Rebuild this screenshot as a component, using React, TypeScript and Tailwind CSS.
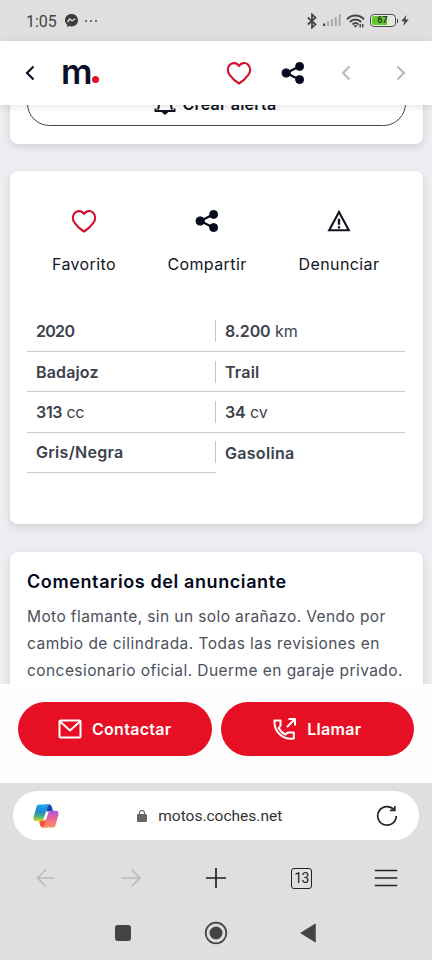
import type { ReactNode } from "react"

function HeartIcon() {
  return (
    <svg width="26" height="24" viewBox="0 0 26 24" fill="none" stroke="#d20f2f" strokeWidth="2.1" strokeLinejoin="round">
      <path d="M13 5C11 1.700 6.700 1.200 4.100 3.500C1 6.300 1.300 10.700 3.600 13.800C6.200 17.200 9.200 20.200 13 22.500C16.800 20.200 19.800 17.200 22.400 13.800C24.700 10.700 25 6.300 21.900 3.500C19.300 1.200 15 1.700 13 5Z" />
    </svg>
  )
}

function ShareIcon() {
  return (
    <svg width="24" height="24" viewBox="0 0 24 24" fill="#04091c" stroke="#04091c">
      <path d="M5.3 12 18.7 5.3M5.3 12l13.4 6.7" fill="none" strokeWidth="2.3" />
      <circle cx="5.2" cy="12" r="4.1" />
      <circle cx="18.6" cy="5.4" r="4" />
      <circle cx="18.6" cy="18.6" r="4" />
    </svg>
  )
}

function Chevron({ right, className }: { right?: boolean; className: string }) {
  return (
    <svg width="12" height="18" viewBox="0 0 12 18" fill="none" stroke="currentColor" strokeWidth="2.1" className={className}>
      <path d={right ? "M2.5 2.5 9 9l-6.5 6.5" : "M9.5 2.5 3 9l6.5 6.5"} />
    </svg>
  )
}

function WarningIcon() {
  return (
    <svg width="24" height="24" viewBox="0 0 24 24" fill="none" stroke="#10141f" strokeWidth="2.1">
      <path d="M12 3 2.2 21.3h19.6Z" />
      <path d="M12 9.8v6M12 17.2v2.200" strokeWidth="2.4" />
    </svg>
  )
}

function CopilotIcon() {
  return (
    <svg width="26" height="24" viewBox="0 0 26 24">
      <defs>
        <linearGradient id="cool" x1="0" y1="0" x2="0" y2="1">
          <stop stopColor="#21a4ee" />
          <stop offset=".45" stopColor="#2487cf" />
          <stop offset=".72" stopColor="#4bb575" />
          <stop offset="1" stopColor="#e9d22f" />
        </linearGradient>
        <linearGradient id="warm" x1="0" y1="0" x2="0" y2="1">
          <stop stopColor="#a855e8" />
          <stop offset=".5" stopColor="#ee638d" />
          <stop offset="1" stopColor="#ff9460" />
        </linearGradient>
      </defs>
      <path d="M12 .5h4.200c1.600 0 2.200 1 2.600 2.500l1.400 4.500H14Z" fill="#1646b5" />
      <path d="M6 16h7l1 7.500H9.700c-1.500 0-2.200-1-2.600-2.400Z" fill="#f1592a" />
      <path d="M6.200.5H17c-1.500.4-2.100 1.800-2.600 3.400l-3.500 10.600c-.5 1.600-1.300 2.800-2.800 2.800H3.100C.8 17.300.1 15.500.7 13L3.300 3.300C3.800 1.400 4.600.5 6.200.5Z" fill="url(#cool)" />
      <path d="M19.800 23.500H9c1.500-.4 2.100-1.800 2.600-3.400L15.100 9.500c.5-1.600 1.300-2.800 2.800-2.800h5c2.300 0 3 1.800 2.400 4.300l-2.600 9.700c-.5 1.900-1.300 2.800-2.900 2.800Z" fill="url(#warm)" />
      <path d="m12.900 8.300-2.700 8.200h2l3-8.200Z" fill="#fff" />
    </svg>
  )
}

function StatusBar() {
  return (
    <div className="flex h-[41px] shrink-0 items-center bg-[#dfdfdf] pl-[26px] pr-[23px] text-[#444]">
      <span className="w-[39px] pt-0.5 font-['Roboto',sans-serif] text-[16px] leading-5">1:05</span>
      <svg width="13" height="13" viewBox="0 0 13 13">
        <path d="M6.5 0C2.8 0 0 2.7 0 6.2c0 1.9.8 3.4 2.1 4.5v1.8c0 .3.3.5.6.3l1.6-.7c.7.2 1.4.3 2.2.3 3.7 0 6.5-2.7 6.5-6.2S10.200 0 6.500 0Z" fill="#3d3d3d" />
        <path d="m2.500 8 2.300-3 2.300 1.800 3.300-2" fill="none" stroke="#e5e5e5" strokeWidth="1.300" />
      </svg>
      <div className="ml-[7px] flex gap-[3px]">
        <span className="size-[2px] rounded-full bg-[#444]" />
        <span className="size-[2px] rounded-full bg-[#444]" />
        <span className="size-[2px] rounded-full bg-[#444]" />
      </div>
      <svg className="ml-auto" width="10" height="16" viewBox="0 0 10 16" fill="none" stroke="#444" strokeWidth="1.700">
        <path d="m.8 4.500 7.700 6.800L5 14.700V1.300l3.500 3.400L.8 11.500" />
      </svg>
      <svg className="ml-[6px]" width="18" height="13" viewBox="0 0 18 13" fill="#a8a8a8">
        <rect y="9.500" width="2.200" height="2.500" fill="#444" />
        <rect x="4" y="7.500" width="2" height="4.500" />
        <rect x="7.900" y="5.500" width="2" height="6.500" />
        <rect x="11.800" y="3" width="2" height="9" />
        <rect x="15.700" y="0" width="2" height="12" />
      </svg>
      <svg className="ml-[5px]" width="19" height="14" viewBox="0 0 19 14" fill="none" stroke="#444" strokeWidth="1.900">
        <path d="M1 5.300c4.700-5 12.300-5 17 0M3.800 8c3.200-3.300 8.200-3.300 11.400 0M6.500 10.500c1.800-1.700 4.200-1.700 6 0" />
        <path d="m7.500 11.300 2 2.500 2-2.500Z" fill="#444" stroke="none" />
        <path d="M14.200 10v3.500M16.700 10v3.500" strokeWidth="1.500" />
      </svg>
      <div className="ml-[5px] flex h-[13px] w-[26px] items-center rounded-[4px] border-[1.500px] border-[#4b4b4b] bg-[#f0f0f0] p-px">
        <div className="flex h-full w-full items-center justify-center rounded-[2px] bg-linear-to-r from-[#62c92b] from-70% to-[#dfeada] to-70% font-['Roboto',sans-serif] text-[9px] font-bold leading-none text-[#333]">67</div>
      </div>
      <span className="ml-px h-1 w-[1.500px] bg-[#444]" />
      <svg className="ml-[3px]" width="8" height="11" viewBox="0 0 8 11">
        <path d="M5.500 0 .3 6.200h3L2.300 11l5.400-6.500H4.400Z" fill="#444" />
      </svg>
    </div>
  )
}

function Header() {
  return (
    <header className="relative z-10 flex h-16 shrink-0 items-center bg-white px-[25px] shadow-[0_2px_8px_rgba(0,0,0,0.1)]">
      <Chevron className="-ml-px text-[#04091c]" />
      <div className="ml-[25px] flex items-baseline">
        <span className="-mt-1 w-[31px] text-[35px] font-semibold leading-[44px] tracking-tight text-[#0b1026]">m</span>
        <span className="mb-px size-[7px] -translate-y-px rounded-full bg-[#e40f2b]" />
      </div>
      <div className="ml-auto flex items-center">
        <HeartIcon />
        <span className="ml-[29px]"><ShareIcon /></span>
        <Chevron className="ml-[35px] text-[#b8b8b8]" />
        <Chevron right className="ml-[43px] text-[#b8b8b8]" />
      </div>
    </header>
  )
}

function Action({ icon, label, className }: { icon: ReactNode; label: string; className: string }) {
  return (
    <div className={`flex flex-col items-center gap-[19px] ${className}`}>
      {icon}
      <span className="text-base leading-6 whitespace-nowrap text-[#11151f]">{label}</span>
    </div>
  )
}

const specs = [
  { value: "2020", className: "tracking-[-0.7px]" },
  { value: "8.200", unit: "km", className: "tracking-[-0.1px]" },
  { value: "Badajoz", className: "tracking-[0.15px]" },
  { value: "Trail", className: "tracking-[0.2px]" },
  { value: "313", unit: "cc", className: "tracking-[-0.3px]" },
  { value: "34", unit: "cv", className: "tracking-[-0.1px]" },
  { value: "Gris/Negra", className: "tracking-[0.3px]" },
  { value: "Gasolina", className: "tracking-[0.3px]" },
]

const comments = [
  { text: "Moto flamante, sin un solo arañazo. Vendo por", className: "tracking-[0.4px]" },
  { text: "cambio de cilindrada. Todas las revisiones en", className: "tracking-[0.46px]" },
  { text: "concesionario oficial. Duerme en garaje privado.", className: "tracking-[0.43px]" },
]

function Listing() {
  return (
    <main className="h-[579px] shrink-0 overflow-hidden bg-[#edeef2] pl-[10px] pr-[9px]">
      <section className="-mt-6 h-[63px] rounded-b-lg bg-white px-[17px] shadow-[0_3px_8px_rgba(0,0,0,0.12)]">
        <div className="flex h-[45px] items-center justify-center rounded-full border border-[#42454d] pr-[3px] text-[#11151f]">
          <svg width="22" height="24" viewBox="0 0 22 24" fill="none" stroke="currentColor" strokeWidth="2">
            <path d="M4 17.500c1-2 1-5 1-8C5 5 7 2 11 2s6 3 6 7.500c0 3 0 6 1 8M1.500 16.500v2.500h19v-2.500" />
            <path d="M7.500 20h7L11 23Z" fill="currentColor" stroke="none" />
          </svg>
          <span className="ml-[7px] text-base font-semibold tracking-[0.2px]">Crear alerta</span>
        </div>
      </section>

      <section className="mt-[27px] h-[353px] rounded-lg bg-white px-[17px] shadow-[0_3px_8px_rgba(0,0,0,0.12)]">
        <div className="flex pt-[38px] tracking-[0.4px]">
          <Action icon={<HeartIcon />} label="Favorito" className="w-[114px]" />
          <Action icon={<ShareIcon />} label="Compartir" className="w-[132px]" />
          <Action icon={<WarningIcon />} label="Denunciar" className="w-[132px]" />
        </div>
        <div className="mt-[35.500px] grid grid-cols-[189px_189px]">
          {specs.map((spec, i) => (
            <div
              key={i}
              className={`flex h-[40.350px] items-center ${i < specs.length - 1 ? "border-b border-[#c9cbd0]" : ""}`}
            >
              <div className={`h-[22px] w-full pl-[9px] text-base leading-[22px] text-[#3b414d] ${spec.className} ${i % 2 === 0 ? "border-r border-[#c4c6cb]" : ""}`}>
                <span className="font-semibold">{spec.value}</span>
                {spec.unit && <span> {spec.unit}</span>}
              </div>
            </div>
          ))}
        </div>
      </section>

      <section className="mt-7 h-48 rounded-lg bg-white px-[17px] pt-4 shadow-[0_3px_8px_rgba(0,0,0,0.12)]">
        <h2 className="text-[18px] font-semibold leading-7 tracking-[0.6px] text-[#04091c]">Comentarios del anunciante</h2>
        <div className="mt-[7px] text-[15.500px] leading-[27px] whitespace-nowrap text-[#4b505b]">
          {comments.map((line) => (
            <p key={line.text} className={line.className}>{line.text}</p>
          ))}
        </div>
      </section>
    </main>
  )
}

function ContactBar() {
  return (
    <div className="relative z-10 flex h-[99px] shrink-0 gap-[9px] bg-[#fefefe] px-[18px] pt-[18px] text-base font-semibold tracking-[0.3px] text-white">
      <button className="flex h-[54px] flex-1 items-center justify-center rounded-full bg-[#e60f23]">
        <svg width="24" height="20" viewBox="0 0 24 20" fill="none" stroke="currentColor" strokeWidth="2">
          <rect x="1.500" y="1.500" width="21" height="17" rx="1" />
          <path d="m2 2.500 10 9 10-9" />
        </svg>
        <span className="ml-[10px]">Contactar</span>
      </button>
      <button className="flex h-[54px] flex-1 items-center justify-center rounded-full bg-[#e60f23]">
        <svg width="24" height="24" viewBox="0 0 24 24" fill="none" stroke="currentColor" strokeWidth="2" strokeLinejoin="round">
          <path d="M1.500 3.500h6v5.200L5.700 11c1.500 3 3.500 5 6.700 6.500l2.400-2h6v6C9.500 23 .8 14.500 1.500 3.500Z" />
          <path d="m14 10 8-8M15.500 2H22v6.500" />
        </svg>
        <span className="ml-[10px]">Llamar</span>
      </button>
    </div>
  )
}

function BrowserBar() {
  return (
    <footer className="h-[177px] shrink-0 bg-[#dfdfdf] pt-2 font-['Roboto',sans-serif]">
      <div className="mx-[13px] flex h-[49px] items-center rounded-full bg-white pl-[19.500px] pr-[21px]">
        <CopilotIcon />
        <div className="flex flex-1 items-center justify-center pr-[15px]">
          <svg width="10" height="12" viewBox="0 0 10 12">
            <rect y="4" width="10" height="8" rx="1.200" fill="#666" />
            <path d="M2.500 5V3a2.500 2.500 0 0 1 5 0v2" fill="none" stroke="#666" strokeWidth="1.200" />
          </svg>
          <span className="ml-[11px] pt-0.5 text-[15.500px] text-[#333]">motos.coches.net</span>
        </div>
        <svg width="22" height="22" viewBox="0 0 22 22" fill="none" stroke="#222" strokeWidth="1.700">
          <path d="M17.800 4.500A9.300 9.300 0 1 0 20.300 11" />
          <path d="M14 5.300h4.800V1" />
        </svg>
      </div>
      <div className="mt-3 flex h-[54px] items-center justify-between pb-0.5 pl-[35px] pr-[34px]">
        <svg width="22" height="20" viewBox="0 0 22 20" fill="none" stroke="#bababa" strokeWidth="1.500">
          <path d="M19.500 10H3M11 1.500 2.500 10l8.500 8.500" />
        </svg>
        <svg width="22" height="20" viewBox="0 0 22 20" fill="none" stroke="#bababa" strokeWidth="1.500">
          <path d="M1 10h18M11.500 1.500 20 10l-8.500 8.500" />
        </svg>
        <svg width="22" height="22" viewBox="0 0 22 22" stroke="#222" strokeWidth="1.700">
          <path d="M1 11h20M11 1v20" />
        </svg>
        <span className="relative left-px flex size-[21px] items-center justify-center rounded-[3px] border-[1.500px] border-[#222] text-[14px] leading-none tracking-[-0.5px] text-[#222]">13</span>
        <svg width="24" height="18" viewBox="0 0 24 18" stroke="#222" strokeWidth="1.600">
          <path d="M.8 1.500h22.400M.8 9h22.400M.8 16.500h22.400" />
        </svg>
      </div>
      <div className="flex h-[54px] items-center pb-px pl-[115px]">
        <span className="size-4 rounded-[3px] bg-[#444]" />
        <svg className="ml-[73px]" width="24" height="24" viewBox="0 0 24 24">
          <circle cx="12" cy="12" r="10.300" fill="none" stroke="#444" strokeWidth="1.700" />
          <circle cx="12" cy="12" r="6.500" fill="#444" />
        </svg>
        <svg className="ml-[72px]" width="16" height="20" viewBox="0 0 16 20">
          <path d="M15.300 1v18L.7 10Z" fill="#444" stroke="#444" strokeWidth=".8" strokeLinejoin="round" />
        </svg>
      </div>
    </footer>
  )
}

export default function App() {
  return (
    <div className="flex h-[960px] w-[432px] flex-col overflow-hidden bg-white font-['Inter',sans-serif]">
      <StatusBar />
      <Header />
      <Listing />
      <ContactBar />
      <BrowserBar />
    </div>
  )
}
